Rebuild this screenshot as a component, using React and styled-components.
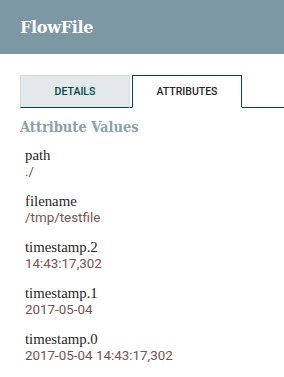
import React from 'react'
import styled, { createGlobalStyle } from 'styled-components'

const Global = createGlobalStyle`
  body {
    margin: 0;
    background: #ffffff;
    font-family: Roboto, "Liberation Sans", sans-serif;
  }
`

const Header = styled.div`
  height: 54px;
  background-color: #7c98a5;
  display: flex;
  align-items: center;
  padding: 0 20px;
`

const Title = styled.h1`
  margin: 0;
  font-family: "DejaVu Serif", "Liberation Serif", serif;
  font-weight: bold;
  font-size: 16px;
  color: #ffffff;
  letter-spacing: -0.3px;
`

const Body = styled.div`
  padding: 21px 0 0 20px;
`

const Tabs = styled.div`
  display: flex;
  align-items: flex-end;
  border-bottom: 1px solid #004849;
  gap: 2px;
`

const Tab = styled.div`
  width: 110px;
  height: 33px;
  display: flex;
  align-items: center;
  justify-content: center;
  font-size: 10.5px;
  text-transform: uppercase;
  font-weight: 500;
  box-sizing: border-box;
  margin-bottom: -1px;
  background-color: ${props => props.$active ? '#ffffff' : '#e3e8eb'};
  color: ${props => props.$active ? '#262626' : '#004849'};
  border: 1px solid ${props => props.$active ? '#004849' : '#d0dbe0'};
  border-bottom: 1px solid ${props => props.$active ? '#ffffff' : '#004849'};
`

const Section = styled.h2`
  margin: 10px 0 0;
  font-family: "DejaVu Serif Condensed", "DejaVu Serif", serif;
  font-weight: bold;
  font-size: 14.5px;
  color: #8aa2ad;
`

const List = styled.div`
  padding: 11px 0 0 5px;
  display: flex;
  flex-direction: column;
  gap: 12px;
`

const Item = styled.div`
  display: flex;
  flex-direction: column;
`

const Label = styled.div`
  font-family: "Liberation Serif", "DejaVu Serif", serif;
  font-size: 14.8px;
  line-height: 18px;
  color: #262626;
`

const Value = styled.div`
  font-size: 13.4px;
  line-height: 16px;
  color: #775351;
`

const attributes = [
  ['path', './'],
  ['filename', '/tmp/testfile'],
  ['timestamp.2', '14:43:17,302'],
  ['timestamp.1', '2017-05-04'],
  ['timestamp.0', '2017-05-04 14:43:17,302'],
]

export default function App() {
  return (
    <>
      <Global />
      <Header>
        <Title>FlowFile</Title>
      </Header>
      <Body>
        <Tabs>
          <Tab>Details</Tab>
          <Tab $active>Attributes</Tab>
        </Tabs>
        <Section>Attribute Values</Section>
        <List>
          {attributes.map(([k, v]) => (
            <Item key={k}>
              <Label>{k}</Label>
              <Value>{v}</Value>
            </Item>
          ))}
        </List>
      </Body>
    </>
  )
}
